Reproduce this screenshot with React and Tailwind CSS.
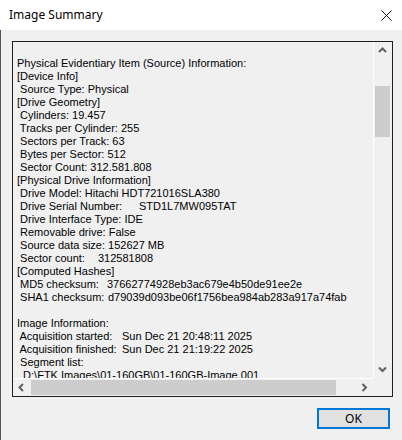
const mono = { fontFamily: "'Liberation Sans', Arial, sans-serif" };

const Chevron = ({ dir }) => {
  const paths = {
    up: "M1 5 L4.5 1.5 L8 5",
    down: "M1 1.5 L4.5 5 L8 1.5",
    left: "M5 1 L1.5 4.5 L5 8",
    right: "M1.5 1 L5 4.5 L1.5 8",
  };
  const vertical = dir === "up" || dir === "down";
  return (
    <svg width={vertical ? 9 : 7} height={vertical ? 7 : 9} viewBox={vertical ? "0 0 9 7" : "0 0 7 9"}>
      <path d={paths[dir]} fill="none" stroke="#606060" strokeWidth="2" />
    </svg>
  );
};

const Line = ({ children }) => <div className="h-[13px] whitespace-pre">{children}</div>;

const KV = ({ label, w, value }) => (
  <div className="h-[13px] whitespace-pre flex">
    <span className="inline-block shrink-0" style={{ width: w }}>{label}</span>
    <span>{value}</span>
  </div>
);

export default function App() {
  return (
    <div className="w-[402px] h-[440px] bg-[#f0f0f0] flex flex-col overflow-hidden">
      {/* Title bar */}
      <div className="h-[30px] bg-white flex items-center justify-between pl-[9px] pr-[10px] shrink-0">
        <span className="text-[12px] text-black" style={{ fontFamily: "'Noto Sans', 'Open Sans', sans-serif" }}>
          Image Summary
        </span>
        <svg width="11" height="11" viewBox="0 0 11 11">
          <path d="M0.5 0.5 L10.5 10.5 M10.5 0.5 L0.5 10.5" stroke="#111" strokeWidth="1" />
        </svg>
      </div>

      {/* Body */}
      <div className="flex-1 border-l border-[#555] flex flex-col pl-[11px] pt-[11px]">
        <div className="w-[381px] h-[356px] border border-[#1e1e1e] flex flex-col">
          <div className="flex h-[336px]">
            {/* Text area */}
            <div className="w-[360px] h-[336px] overflow-hidden pt-[2px] pl-[4px] text-[11px] leading-[13px] text-black" style={mono}>
              <Line> </Line>
              <Line>Physical Evidentiary Item (Source) Information:</Line>
              <Line>[Device Info]</Line>
              <Line> Source Type: Physical</Line>
              <Line>[Drive Geometry]</Line>
              <Line> Cylinders: 19.457</Line>
              <Line> Tracks per Cylinder: 255</Line>
              <Line> Sectors per Track: 63</Line>
              <Line> Bytes per Sector: 512</Line>
              <Line> Sector Count: 312.581.808</Line>
              <Line>[Physical Drive Information]</Line>
              <Line> Drive Model: Hitachi HDT721016SLA380</Line>
              <KV label=" Drive Serial Number:" w={122} value="STD1L7MW095TAT" />
              <Line> Drive Interface Type: IDE</Line>
              <Line> Removable drive: False</Line>
              <Line> Source data size: 152627 MB</Line>
              <KV label=" Sector count:" w={81} value="312581808" />
              <Line>[Computed Hashes]</Line>
              <KV label=" MD5 checksum:" w={90} value="37662774928eb3ac679e4b50de91ee2e" />
              <KV label=" SHA1 checksum:" w={91} value="d79039d093be06f1756bea984ab283a917a74fab" />
              <Line> </Line>
              <Line>Image Information:</Line>
              <KV label=" Acquisition started:" w={105} value="Sun Dec 21 20:48:11 2025" />
              <KV label=" Acquisition finished:" w={105} value="Sun Dec 21 21:19:22 2025" />
              <Line> Segment list:</Line>
              <Line>  D:\FTK Images\01-160GB\01-160GB-Image.001</Line>
            </div>
            {/* Vertical scrollbar */}
            <div className="w-[18px] h-[336px] border-l border-white flex flex-col">
              <div className="h-[17px] flex items-center justify-center">
                <Chevron dir="up" />
              </div>
              <div className="flex-1 px-[1px] pt-[27px]">
                <div className="h-[51px] bg-[#cdcdcd]" />
              </div>
              <div className="h-[17px] flex items-center justify-center">
                <Chevron dir="down" />
              </div>
            </div>
          </div>
          {/* Horizontal scrollbar */}
          <div className="flex h-[18px]">
            <div className="w-[360px] border-t border-white flex">
              <div className="w-[17px] flex items-center justify-center">
                <Chevron dir="left" />
              </div>
              <div className="flex-1 py-[1px] pl-[1px] pr-[20px]">
                <div className="h-full bg-[#cdcdcd]" />
              </div>
              <div className="w-[17px] flex items-center justify-center">
                <Chevron dir="right" />
              </div>
            </div>
            <div className="w-[18px]" />
          </div>
        </div>

        {/* Buttons */}
        <div className="flex justify-end pr-[12px] pt-[11px]">
          <button
            className="w-[73px] h-[21px] bg-[#e1e1e1] border-2 border-[#0078d7] text-[12px] text-black flex items-center justify-center"
            style={{ fontFamily: "'Noto Sans', 'Open Sans', sans-serif" }}
          >
            OK
          </button>
        </div>
      </div>
    </div>
  );
}
